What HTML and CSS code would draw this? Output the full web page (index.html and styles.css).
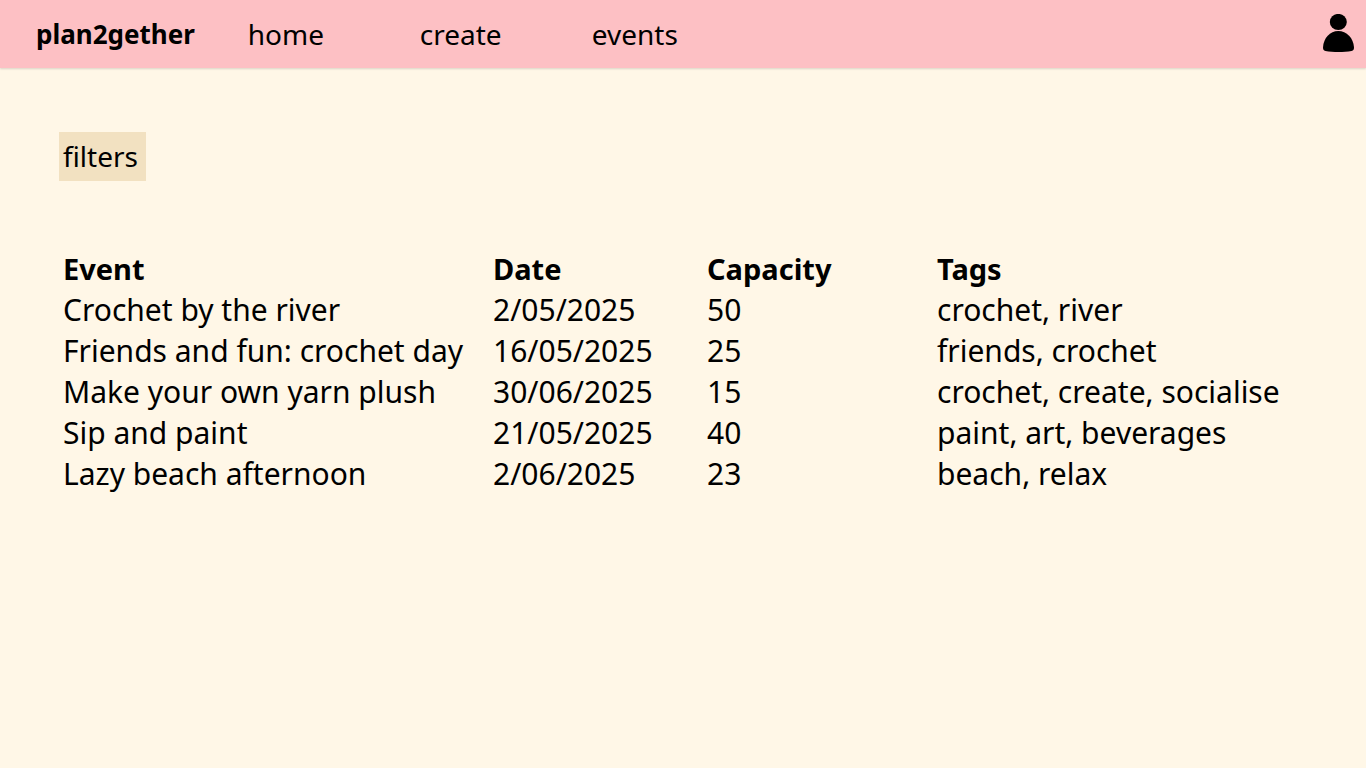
FILE: index.html
```html
<!DOCTYPE html>
<html lang="en">
<head>
	<meta charset="UTF-8">
	<meta name="viewport" content="width=device-width, initial-scale=1">
	<title>plan2gether</title>
	<link rel="stylesheet" href="styles.css">
</head>
<body>
	<header class="navbar">
		<a class="brand" href="#">plan2gether</a>
		<nav class="links">
			<a href="#">home</a>
			<a href="#">create</a>
			<a href="#">events</a>
		</nav>
		<a class="profile" href="#" aria-label="profile">
			<svg width="32" height="40" viewBox="0 0 32 40" aria-hidden="true">
				<ellipse cx="16.3" cy="8" rx="8.5" ry="8.1"/>
				<path d="M1 33.5C1.5 24 8 17 16.3 17S31.5 24 32 33.5C32 35.5 31.5 36.5 29.5 37C22 38.3 11 38.3 3.5 37C1.5 36.5 1 35.5 1 33.5Z"/>
			</svg>
		</a>
	</header>

	<main class="content">
		<button class="filters" type="button">filters</button>

		<table class="events">
			<thead>
				<tr>
					<th class="col-event">Event</th>
					<th class="col-date">Date</th>
					<th class="col-capacity">Capacity</th>
					<th>Tags</th>
				</tr>
			</thead>
			<tbody>
				<tr>
					<td>Crochet by the river</td>
					<td>2/05/2025</td>
					<td>50</td>
					<td>crochet, river</td>
				</tr>
				<tr>
					<td>Friends and fun: crochet day</td>
					<td>16/05/2025</td>
					<td>25</td>
					<td>friends, crochet</td>
				</tr>
				<tr>
					<td>Make your own yarn plush</td>
					<td>30/06/2025</td>
					<td>15</td>
					<td>crochet, create, socialise</td>
				</tr>
				<tr>
					<td>Sip and paint</td>
					<td>21/05/2025</td>
					<td>40</td>
					<td>paint, art, beverages</td>
				</tr>
				<tr>
					<td>Lazy beach afternoon</td>
					<td>2/06/2025</td>
					<td>23</td>
					<td>beach, relax</td>
				</tr>
			</tbody>
		</table>
	</main>
</body>
</html>
```
FILE: styles.css
```css
*{
	margin: 0;
	padding: 0;
	box-sizing: border-box;
}
body{
	background: #fff7e7;
	color: #000;
	font-family: "Noto Sans", "Open Sans", sans-serif;
	font-size: 30px;
	line-height: 41px;
}
a{
	color: inherit;
	text-decoration: none;
}
.navbar{
	display: flex;
	align-items: center;
	padding: 14px 12px 14px 36px;
	background: #fdc0c4;
	font-size: 28px;
	line-height: 40px;
	box-shadow: 0 1px 2px rgba(0, 0, 0, 0.15);
}
.brand{
	font-size: 26px;
	font-weight: bold;
}
.links{
	display: grid;
	grid-template-columns: repeat(3, 172px);
	margin-left: 53px;
}
.profile{
	margin-left: auto;
}
.profile svg{
	display: block;
}
.content{
	padding: 64px 59px;
}
.filters{
	display: block;
	padding: 4px 8px 4px 4px;
	border: none;
	background: #f2e1c1;
	color: inherit;
	font: inherit;
	font-size: 28px;
}
.events{
	width: 100%;
	margin-top: 67px;
	border-collapse: collapse;
	text-align: left;
}
.events th,
.events td{
	padding-left: 4px;
}
.events th{
	font-size: 29px;
}
.col-event{
	width: 430px;
}
.col-date{
	width: 214px;
}
.col-capacity{
	width: 230px;
}
```
